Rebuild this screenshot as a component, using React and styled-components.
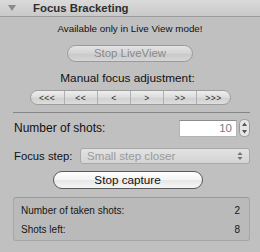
import React from "react";
import styled, { createGlobalStyle } from "styled-components";

const Global = createGlobalStyle`
  html, body { margin: 0; padding: 0; background: #c0c0c0; }
  body { font-family: "Liberation Sans", Arial, sans-serif; color: #1a1a1a; }
  #root { width: 260px; height: 252px; overflow: hidden; }
`;

const Panel = styled.div`
  width: 260px;
  height: 252px;
  background: #c0c0c0;
  display: flex;
  flex-direction: column;
  box-sizing: border-box;
`;

const Header = styled.div`
  height: 16px;
  border-bottom: 1px solid #9c9c9c;
  background: linear-gradient(#dadada, #c9c9c9);
  display: flex;
  align-items: center;
`;

const Disclosure = styled.svg`
  margin-left: 8px;
  width: 8px;
  height: 6px;
`;

const Title = styled.div`
  margin-left: 17px;
  font-weight: bold;
  font-size: 11.4px;
  color: #2e2e2e;
  line-height: 16px;
`;

const Body = styled.div`
  display: flex;
  flex-direction: column;
  padding: 0 10px;
`;

const Notice = styled.div`
  margin-top: 6px;
  height: 12px;
  line-height: 12px;
  font-size: 9.8px;
  text-align: center;
  color: #111;
`;

const PillButton = styled.div`
  align-self: center;
  margin-top: ${(p) => p.$mt}px;
  margin-left: ${(p) => p.$ml || 0}px;
  width: ${(p) => p.$w}px;
  height: ${(p) => p.$h}px;
  box-sizing: border-box;
  border-radius: 9px;
  border: 1px solid ${(p) => (p.$disabled ? "#9a9a9a" : "#5a5a5a")};
  background: ${(p) =>
    p.$disabled
      ? "linear-gradient(#e4e4e4, #d2d2d2 50%, #c8c8c8 51%, #d6d6d6)"
      : "linear-gradient(#ffffff, #f4f4f4 50%, #e6e6e6 51%, #f6f6f6)"};
  color: ${(p) => (p.$disabled ? "#8a8a8a" : "#111")};
  font-size: ${(p) => p.$fs}px;
  display: flex;
  align-items: center;
  justify-content: center;
  line-height: 1;
`;

const SectionLabel = styled.div`
  margin-top: 9px;
  height: 14px;
  line-height: 14px;
  font-size: 11.8px;
  text-align: center;
  margin-right: 5px;
  color: #111;
`;

const Segmented = styled.div`
  align-self: center;
  margin-top: 5px;
  width: 201px;
  height: 15px;
  box-sizing: border-box;
  border: 1px solid #9d9d9d;
  border-radius: 8px;
  background: linear-gradient(#eeeeee, #dcdcdc 50%, #cfcfcf 51%, #dedede);
  display: grid;
  grid-template-columns: repeat(6, 1fr);
  overflow: hidden;
`;

const Segment = styled.div`
  display: flex;
  align-items: center;
  justify-content: center;
  font-size: 8.5px;
  letter-spacing: 0.5px;
  color: #2a2a2a;
  border-left: ${(p) => (p.$first ? "none" : "1px solid #b0b0b0")};
`;

const Separator = styled.div`
  margin: 7px 0 0 3px;
  height: 1px;
  background: #858585;
`;

const Row = styled.div`
  display: flex;
  align-items: center;
  margin-top: ${(p) => p.$mt}px;
  margin-left: 4px;
  height: ${(p) => p.$h}px;
`;

const Label = styled.div`
  font-size: ${(p) => p.$fs || 12}px;
  color: #111;
  white-space: nowrap;
`;

const NumberField = styled.div`
  margin-left: auto;
  width: 58px;
  height: 17px;
  box-sizing: border-box;
  background: #fff;
  border: 1px solid #b4b4b4;
  border-top-color: #8c8c8c;
  font-size: 11.5px;
  color: #7a7a7a;
  text-align: right;
  padding-right: 4px;
  line-height: 15px;
`;

const Stepper = styled.svg`
  margin-left: 2px;
  width: 11px;
  height: 18px;
`;

const Popup = styled.div`
  margin-left: auto;
  width: 170px;
  height: 16px;
  box-sizing: border-box;
  border: 1px solid #a8a8a8;
  border-radius: 3px;
  background: linear-gradient(#e2e2e2, #d4d4d4);
  display: flex;
  align-items: center;
  padding: 0 6px;
  font-size: 11.6px;
  color: #9a9a9a;
`;

const PopupArrows = styled.svg`
  margin-left: auto;
  width: 6px;
  height: 10px;
`;

const InfoBox = styled.div`
  margin: 8px 0 0 3px;
  height: 44px;
  box-sizing: border-box;
  border: 1px solid #a6a6a6;
  border-top-color: #9a9a9a;
  border-radius: 3px;
  background: #bababa;
  display: flex;
  flex-direction: column;
  padding: 7px 9px 0 7px;
  gap: 7px;
`;

const InfoRow = styled.div`
  display: flex;
  justify-content: space-between;
  font-size: 10px;
  line-height: 12px;
  color: #161616;
`;

const arrows = ["<<<", "<<", "<", ">", ">>", ">>>"];

export default function App() {
  return (
    <>
      <Global />
      <Panel>
        <Header>
          <Disclosure viewBox="0 0 8 6">
            <path d="M0 0 L8 0 L4 6 Z" fill="#8a8a8a" />
          </Disclosure>
          <Title>Focus Bracketing</Title>
        </Header>
        <Body>
          <Notice>Available only in Live View mode!</Notice>
          <PillButton $mt={10} $w={126} $h={17} $fs={11.4} $disabled>
            Stop LiveView
          </PillButton>
          <SectionLabel>Manual focus adjustment:</SectionLabel>
          <Segmented>
            {arrows.map((a, i) => (
              <Segment key={a} $first={i === 0}>
                {a}
              </Segment>
            ))}
          </Segmented>
          <Separator />
          <Row $mt={6} $h={18}>
            <Label>Number of shots:</Label>
            <NumberField>10</NumberField>
            <Stepper viewBox="0 0 11 18">
              <rect x="0.5" y="0.5" width="10" height="17" rx="4" fill="#e6e6e6" stroke="#9a9a9a" />
              <path d="M3 7 L5.5 3.5 L8 7 Z" fill="#555" />
              <path d="M3 11 L5.5 14.5 L8 11 Z" fill="#555" />
            </Stepper>
          </Row>
          <Row $mt={11} $h={15}>
            <Label $fs={11.3}>Focus step:</Label>
            <Popup>
              Small step closer
              <PopupArrows viewBox="0 0 6 10">
                <path d="M0.5 4 L3 1 L5.5 4 Z" fill="#707070" />
                <path d="M0.5 6 L3 9 L5.5 6 Z" fill="#707070" />
              </PopupArrows>
            </Popup>
          </Row>
          <PillButton $mt={8} $ml={-5} $w={150} $h={18} $fs={11.7}>
            Stop capture
          </PillButton>
          <InfoBox>
            <InfoRow>
              <span>Number of taken shots:</span>
              <span>2</span>
            </InfoRow>
            <InfoRow>
              <span>Shots left:</span>
              <span>8</span>
            </InfoRow>
          </InfoBox>
        </Body>
      </Panel>
    </>
  );
}
